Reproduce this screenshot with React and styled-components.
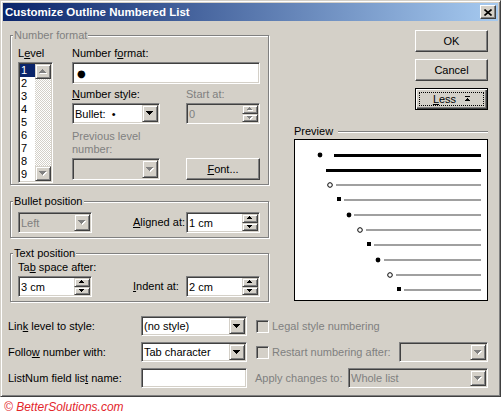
import React from "react";
import styled, { createGlobalStyle } from "styled-components";

const FACE = "#D4D0C8";
const SHADOW = "#808080";
const DARK = "#404040";

const GlobalStyle = createGlobalStyle`
  body {
    margin: 0;
    background: #fff;
    font-family: "Liberation Sans", Arial, sans-serif;
    font-size: 11px;
    color: #000;
  }
`;

const Window = styled.div`
  box-sizing: border-box;
  width: 501px;
  height: 397px;
  background: ${FACE};
  border: 1px solid;
  border-color: ${FACE} ${DARK} ${DARK} ${FACE};
  box-shadow: inset 1px 1px #fff, inset -1px -1px ${SHADOW};
  padding: 2px;
  display: flex;
  flex-direction: column;
`;

const TitleBar = styled.div`
  height: 18px;
  display: flex;
  align-items: center;
  padding: 0 2px 0 2px;
  background: linear-gradient(to right, #0a246a, #a6caf0);
`;

const Title = styled.div`
  flex: 1;
  color: #fff;
  font-weight: bold;
  font-size: 11.5px;
  white-space: nowrap;
`;

const CloseBtn = styled.div`
  box-sizing: border-box;
  width: 16px;
  height: 14px;
  display: flex;
  align-items: center;
  justify-content: center;
  background: ${FACE};
  border: 1px solid;
  border-color: #fff ${DARK} ${DARK} #fff;
  box-shadow: inset -1px -1px ${SHADOW};
`;

const Body = styled.div`
  flex: 1;
  display: flex;
  flex-direction: column;
  padding: 8px 10px 6px 5px;
`;

const TopArea = styled.div`
  display: flex;
  gap: 25px;
`;

const LeftCol = styled.div`
  width: 259px;
  margin-left: 2px;
  display: flex;
  flex-direction: column;
`;

const Group = styled.fieldset`
  margin: ${(p) => p.$mt || 0}px 0 0 0;
  min-width: 0;
  padding: ${(p) => p.$pad};
  border: 1px solid ${SHADOW};
  box-shadow: inset 1px 1px #fff, 1px 1px #fff;
`;

const Legend = styled.legend`
  padding: 0 1px;
  margin-left: -5px;
  line-height: 13px;
  background: ${FACE};
  color: ${(p) => (p.$disabled ? SHADOW : "#000")};
`;

const Label = styled.div`
  line-height: 13px;
  white-space: nowrap;
  color: ${(p) => (p.$disabled ? SHADOW : "#000")};
  margin-bottom: ${(p) => p.$mb ?? 2}px;
  grid-column: ${(p) => p.$col || "auto"};
`;

const FormatGrid = styled.div`
  display: grid;
  grid-template-columns: 35px 188px;
  column-gap: 19px;
`;

const Stack = styled.div`
  display: flex;
  flex-direction: column;
  margin-top: ${(p) => p.$mt || 0}px;
  grid-column: ${(p) => p.$col || "auto"};
`;

const PairGrid = styled.div`
  display: grid;
  grid-template-columns: 88px 26px 74px;
  align-items: end;
  margin-top: ${(p) => p.$mt || 0}px;
`;

const PosGrid = styled.div`
  display: grid;
  grid-template-columns: 74px 41px 53px 74px;
  align-items: center;
`;

const sunken = `
  border: 1px solid;
  border-color: ${SHADOW} #fff #fff ${SHADOW};
  box-shadow: inset 1px 1px ${DARK}, inset -1px -1px ${FACE};
`;

const Field = styled.div`
  box-sizing: border-box;
  display: flex;
  align-items: stretch;
  width: ${(p) => p.$w}px;
  height: ${(p) => p.$h || 21}px;
  padding: 1px;
  ${sunken}
  background: ${(p) => (p.$disabled ? FACE : "#fff")};
  color: ${(p) => (p.$disabled ? SHADOW : "#000")};
  grid-column: ${(p) => p.$col || "auto"};
  margin-left: ${(p) => (p.$push ? "auto" : "0")};
`;

const FieldText = styled.div`
  flex: 1;
  display: flex;
  align-items: center;
  padding-left: 1px;
  white-space: pre;
  overflow: hidden;
`;

const BigBullet = styled.span`
  font-family: "DejaVu Sans", sans-serif;
  font-size: 10px;
  padding-left: 2px;
  margin-top: 1px;
`;

const smallRaised = `
  background: ${FACE};
  border: 1px solid;
  border-color: ${FACE} ${DARK} ${DARK} ${FACE};
  box-shadow: inset 1px 1px #fff, inset -1px -1px ${SHADOW};
`;

const DropBtn = styled.div`
  box-sizing: border-box;
  width: 16px;
  display: flex;
  align-items: center;
  justify-content: center;
  ${smallRaised}
`;

const SpinCol = styled.div`
  width: 16px;
  display: flex;
  flex-direction: column;
`;

const SpinBtn = styled.div`
  box-sizing: border-box;
  flex: 1;
  display: flex;
  align-items: center;
  justify-content: center;
  ${smallRaised}
`;

const ListBox = styled.div`
  box-sizing: border-box;
  width: 35px;
  height: 121px;
  display: flex;
  padding: 1px;
  ${sunken}
  background: #fff;
`;

const Items = styled.div`
  flex: 1;
  display: flex;
  flex-direction: column;
`;

const Item = styled.div`
  height: 13px;
  line-height: 13px;
  padding-left: 1px;
  background: ${(p) => (p.$selected ? "#0a246a" : "transparent")};
  color: ${(p) => (p.$selected ? "#fff" : "#000")};
`;

const ScrollBar = styled.div`
  width: 16px;
  display: flex;
  flex-direction: column;
`;

const ScrollBtn = styled.div`
  box-sizing: border-box;
  height: 15px;
  display: flex;
  align-items: center;
  justify-content: center;
  ${smallRaised}
`;

const Track = styled.div`
  flex: 1;
  background: repeating-conic-gradient(#fff 0 25%, ${FACE} 0 50%) 0 0 / 2px 2px;
`;

const Button = styled.div`
  box-sizing: border-box;
  position: relative;
  width: ${(p) => p.$w || 73}px;
  height: 22px;
  display: flex;
  align-items: center;
  justify-content: center;
  gap: 9px;
  background: ${FACE};
  grid-column: ${(p) => p.$col || "auto"};
  ${(p) =>
    p.$default
      ? `border: 1px solid #000;
         box-shadow: inset 1px 1px #fff, inset -1px -1px ${DARK}, inset -2px -2px ${SHADOW};`
      : `border: 1px solid; border-color: #fff ${DARK} ${DARK} #fff;
         box-shadow: inset -1px -1px ${SHADOW};`}
`;

const FocusRing = styled.div`
  position: absolute;
  inset: 3px;
  border: 1px dotted #000;
`;

const RightCol = styled.div`
  width: 194px;
  margin-top: 1px;
  display: flex;
  flex-direction: column;
  align-items: flex-end;
  gap: 7px;
`;

const PreviewHead = styled.div`
  align-self: stretch;
  display: flex;
  align-items: center;
  gap: 5px;
  margin-top: 8px;
  line-height: 13px;
`;

const Etch = styled.div`
  flex: 1;
  border-top: 1px solid ${SHADOW};
  border-bottom: 1px solid #fff;
`;

const PreviewBox = styled.div`
  align-self: stretch;
  height: 162px;
  box-sizing: border-box;
  border: 1px solid #000;
  background: #fff;
  margin-top: -6px;
`;

const Rows = styled.div`
  margin-top: 14px;
  display: flex;
  flex-direction: column;
  gap: 6px;
`;

const Row = styled.div`
  display: flex;
  align-items: center;
  height: 20px;
`;

const RowLabel = styled.div`
  width: 133px;
  white-space: nowrap;
`;

const Extra = styled.div`
  display: flex;
  align-items: center;
  gap: 3px;
  margin-left: ${(p) => p.$ml}px;
  color: ${SHADOW};
  white-space: nowrap;
`;

const Check = styled.div`
  box-sizing: border-box;
  width: 13px;
  height: 13px;
  ${sunken}
  background: ${FACE};
`;

const Watermark = styled.div`
  margin-top: 3px;
  padding-left: 4px;
  line-height: 14px;
  font-size: 12px;
  font-style: italic;
  color: #e3262b;
`;

const Tri = ({ up, size = 7, disabled }) => {
  const h = Math.ceil(size / 2);
  const pts = up
    ? `0,${h} ${size},${h} ${size / 2},0`
    : `0,0 ${size},0 ${size / 2},${h}`;
  return (
    <svg width={size + 1} height={h + 1} shapeRendering="crispEdges">
      {disabled && <polygon points={pts} fill="#fff" transform="translate(1,1)" />}
      <polygon points={pts} fill={disabled ? SHADOW : "#000"} />
    </svg>
  );
};

const Combo = ({ w, h, text, disabled, col, push }) => (
  <Field $w={w} $h={h} $disabled={disabled} $col={col} $push={push}>
    <FieldText>{text}</FieldText>
    <DropBtn>
      <Tri disabled={disabled} />
    </DropBtn>
  </Field>
);

const Spin = ({ w = 74, text, disabled, col }) => (
  <Field $w={w} $disabled={disabled} $col={col}>
    <FieldText>{text}</FieldText>
    <SpinCol>
      <SpinBtn>
        <Tri up size={5} disabled={disabled} />
      </SpinBtn>
      <SpinBtn>
        <Tri size={5} disabled={disabled} />
      </SpinBtn>
    </SpinCol>
  </Field>
);

// preview rows: y of the line, where it starts, and the bullet drawn before it
const previewLines = [
  { y: 15, x: 39, mark: "dot", mx: 25, strong: true },
  { y: 30, x: 31, strong: true },
  { y: 45, x: 41, mark: "ring", mx: 35 },
  { y: 60, x: 49, mark: "square", mx: 44 },
  { y: 75, x: 59, mark: "dot", mx: 54 },
  { y: 90, x: 71, mark: "ring", mx: 65 },
  { y: 105, x: 79, mark: "square", mx: 74 },
  { y: 120, x: 89, mark: "dot", mx: 83 },
  { y: 135, x: 101, mark: "ring", mx: 95 },
  { y: 150, x: 109, mark: "square", mx: 104 },
];

const PreviewDrawing = () => (
  <svg width="192" height="160">
    {previewLines.map((l, i) => (
      <g key={i}>
        <rect
          x={l.x}
          y={l.strong ? l.y - 1.5 : l.y - 1}
          width={186 - l.x}
          height={l.strong ? 3 : 2}
          fill={l.strong ? "#000" : "#a0a0a0"}
          shapeRendering="crispEdges"
        />
        {l.mark === "dot" && <circle cx={l.mx} cy={l.y} r="2.4" fill="#000" />}
        {l.mark === "ring" && (
          <circle cx={l.mx} cy={l.y} r="2.3" fill="none" stroke="#000" strokeWidth="1" />
        )}
        {l.mark === "square" && <rect x={l.mx - 2} y={l.y - 3} width="4" height="4" fill="#000" />}
      </g>
    ))}
  </svg>
);

const levels = [1, 2, 3, 4, 5, 6, 7, 8, 9];

export default function App() {
  return (
    <>
      <GlobalStyle />
      <Window>
        <TitleBar>
          <Title>Customize Outline Numbered List</Title>
          <CloseBtn>
            <svg width="8" height="7">
              <path d="M0.5 0.5 L7.5 6.5 M7.5 0.5 L0.5 6.5" stroke="#000" strokeWidth="1.6" />
            </svg>
          </CloseBtn>
        </TitleBar>
        <Body>
          <TopArea>
            <LeftCol>
              <Group $pad="5px 8px 1px 7px">
                <Legend $disabled>Number format</Legend>
                <FormatGrid>
                  <Stack>
                    <Label>
                      L<u>e</u>vel
                    </Label>
                    <ListBox>
                      <Items>
                        {levels.map((n) => (
                          <Item key={n} $selected={n === 1}>
                            {n}
                          </Item>
                        ))}
                      </Items>
                      <ScrollBar>
                        <ScrollBtn>
                          <Tri up disabled />
                        </ScrollBtn>
                        <Track />
                        <ScrollBtn>
                          <Tri disabled />
                        </ScrollBtn>
                      </ScrollBar>
                    </ListBox>
                  </Stack>
                  <Stack>
                    <Label>
                      Number f<u>o</u>rmat:
                    </Label>
                    <Field $w={188} $h={22}>
                      <FieldText>
                        <BigBullet>●</BigBullet>
                      </FieldText>
                    </Field>
                    <PairGrid $mt={4}>
                      <Stack>
                        <Label>
                          <u>N</u>umber style:
                        </Label>
                        <Combo w={88} text="Bullet:  •" />
                      </Stack>
                      <Stack $col={3}>
                        <Label $disabled>Start at:</Label>
                        <Spin text="0" disabled />
                      </Stack>
                    </PairGrid>
                    <PairGrid $mt={6}>
                      <Stack>
                        <Label $disabled>
                          Previous level
                          <br />
                          number:
                        </Label>
                        <Combo w={88} h={22} disabled text="" />
                      </Stack>
                      <Button $w={74} $col={3}>
                        <span>
                          <u>F</u>ont...
                        </span>
                      </Button>
                    </PairGrid>
                  </Stack>
                </FormatGrid>
              </Group>

              <Group $mt={10} $pad="4px 8px 4px 7px">
                <Legend>Bullet position</Legend>
                <PosGrid>
                  <Combo w={74} text="Left" disabled />
                  <Label $mb={0} $col={3}>
                    <u>A</u>ligned at:
                  </Label>
                  <Spin text="1 cm" col={4} />
                </PosGrid>
              </Group>

              <Group $mt={9} $pad="1px 8px 4px 7px">
                <Legend>Text position</Legend>
                <PosGrid>
                  <Label $col="1 / 5">
                    Ta<u>b</u> space after:
                  </Label>
                  <Spin text="3 cm" col={1} />
                  <Label $mb={0} $col={3}>
                    <u>I</u>ndent at:
                  </Label>
                  <Spin text="2 cm" col={4} />
                </PosGrid>
              </Group>
            </LeftCol>

            <RightCol>
              <Button>OK</Button>
              <Button>Cancel</Button>
              <Button $default>
                <FocusRing />
                <span>
                  <u>L</u>ess
                </span>
                <svg width="5" height="6" shapeRendering="crispEdges">
                  <rect x="0" y="0" width="5" height="1" fill="#000" />
                  <polygon points="0,5 5,5 2.5,2" fill="#000" />
                </svg>
              </Button>
              <PreviewHead>
                <span>Preview</span>
                <Etch />
              </PreviewHead>
              <PreviewBox>
                <PreviewDrawing />
              </PreviewBox>
            </RightCol>
          </TopArea>

          <Rows>
            <Row>
              <RowLabel>
                Lin<u>k</u> level to style:
              </RowLabel>
              <Combo w={106} h={20} text="(no style)" />
              <Extra $ml={9}>
                <Check />
                <span>Legal style numbering</span>
              </Extra>
            </Row>
            <Row>
              <RowLabel>
                Follo<u>w</u> number with:
              </RowLabel>
              <Combo w={106} h={20} text="Tab character" />
              <Extra $ml={9}>
                <Check />
                <span>Restart numbering after:</span>
              </Extra>
              <Combo w={89} h={20} text="" disabled push />
            </Row>
            <Row>
              <RowLabel>
                ListNum field lis<u>t</u> name:
              </RowLabel>
              <Field $w={106} $h={20}>
                <FieldText />
              </Field>
              <Extra $ml={8}>
                <span>Apply changes to:</span>
              </Extra>
              <Combo w={140} h={20} text="Whole list" disabled push />
            </Row>
          </Rows>
        </Body>
      </Window>
      <Watermark>© BetterSolutions.com</Watermark>
    </>
  );
}
